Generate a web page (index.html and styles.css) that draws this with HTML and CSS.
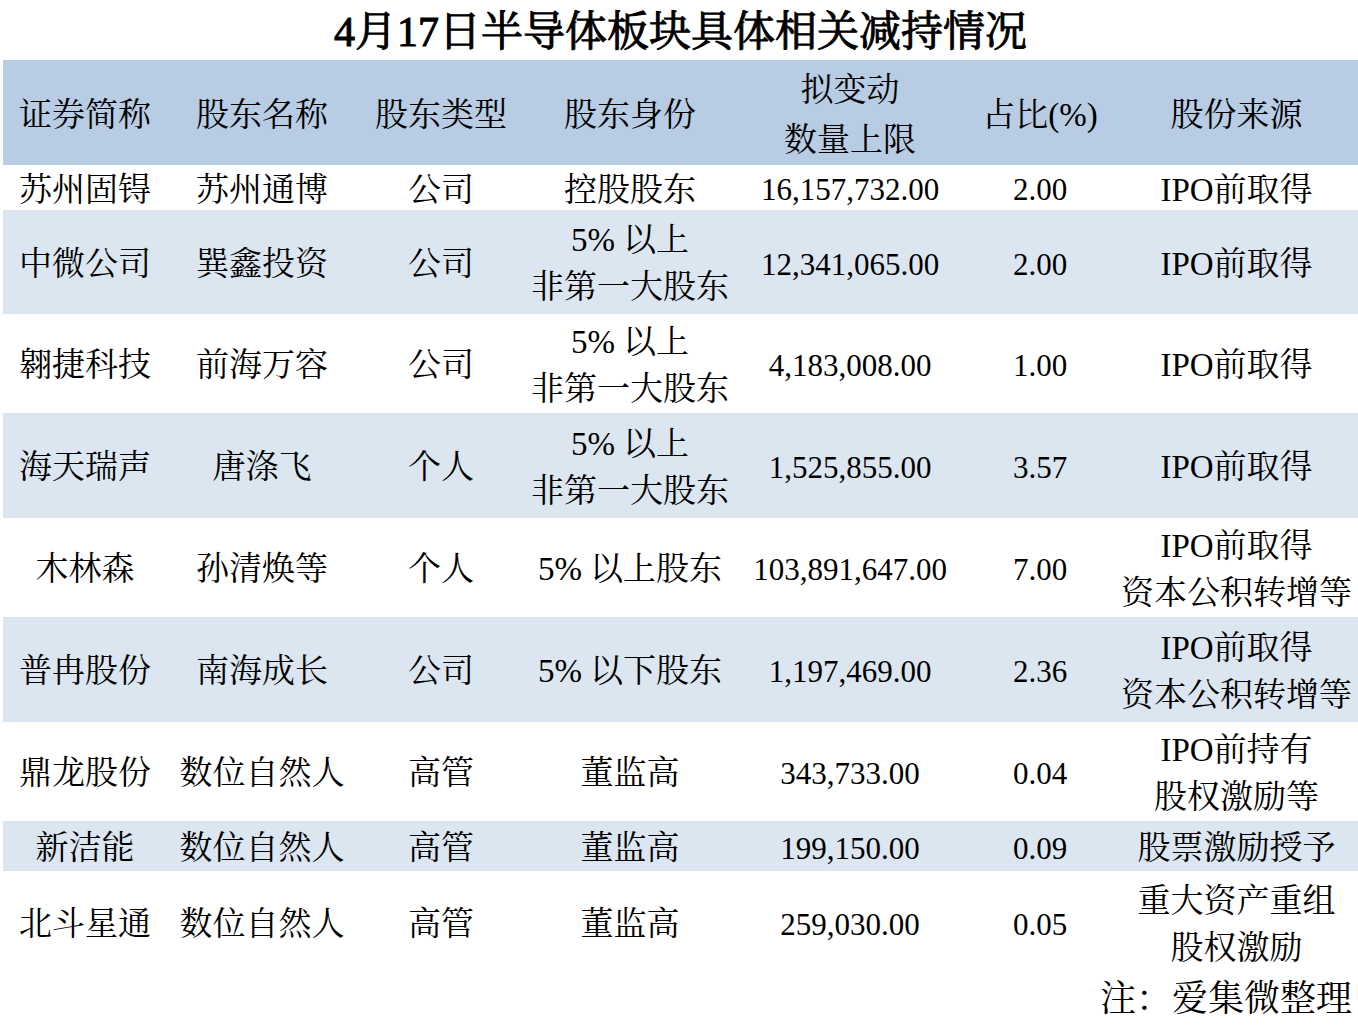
FILE: index.html
```html
<!DOCTYPE html>
<html lang="zh-CN">
<head>
<meta charset="utf-8">
<title>4月17日半导体板块具体相关减持情况</title>
<link rel="stylesheet" href="styles.css">
</head>
<body>
<div class="page">
  <h1 class="title">4月17日半导体板块具体相关减持情况</h1>
  <table class="grid">
    <colgroup>
      <col class="c1"><col class="c2"><col class="c3"><col class="c4"><col class="c5"><col class="c6"><col class="c7">
    </colgroup>
    <thead>
      <tr class="head r105">
        <th>证券简称</th><th>股东名称</th><th>股东类型</th><th>股东身份</th>
        <th>拟变动<br>数量上限</th><th>占比(%)</th><th>股份来源</th>
      </tr>
    </thead>
    <tbody>
      <tr class="r45">
        <td>苏州固锝</td><td>苏州通博</td><td>公司</td><td>控股股东</td>
        <td class="num">16,157,732.00</td><td class="num">2.00</td><td>IPO前取得</td>
      </tr>
      <tr class="alt r104">
        <td>中微公司</td><td>巽鑫投资</td><td>公司</td><td>5% 以上<br>非第一大股东</td>
        <td class="num">12,341,065.00</td><td class="num">2.00</td><td>IPO前取得</td>
      </tr>
      <tr class="r99">
        <td>翱捷科技</td><td>前海万容</td><td>公司</td><td>5% 以上<br>非第一大股东</td>
        <td class="num">4,183,008.00</td><td class="num">1.00</td><td>IPO前取得</td>
      </tr>
      <tr class="alt r105">
        <td>海天瑞声</td><td>唐涤飞</td><td>个人</td><td>5% 以上<br>非第一大股东</td>
        <td class="num">1,525,855.00</td><td class="num">3.57</td><td>IPO前取得</td>
      </tr>
      <tr class="r99">
        <td>木林森</td><td>孙清焕等</td><td>个人</td><td>5% 以上股东</td>
        <td class="num">103,891,647.00</td><td class="num">7.00</td><td>IPO前取得<br>资本公积转增等</td>
      </tr>
      <tr class="alt r105">
        <td>普冉股份</td><td>南海成长</td><td>公司</td><td>5% 以下股东</td>
        <td class="num">1,197,469.00</td><td class="num">2.36</td><td>IPO前取得<br>资本公积转增等</td>
      </tr>
      <tr class="r99">
        <td>鼎龙股份</td><td>数位自然人</td><td>高管</td><td>董监高</td>
        <td class="num">343,733.00</td><td class="num">0.04</td><td>IPO前持有<br>股权激励等</td>
      </tr>
      <tr class="alt r50">
        <td>新洁能</td><td>数位自然人</td><td>高管</td><td>董监高</td>
        <td class="num">199,150.00</td><td class="num">0.09</td><td>股票激励授予</td>
      </tr>
      <tr class="r103">
        <td>北斗星通</td><td>数位自然人</td><td>高管</td><td>董监高</td>
        <td class="num">259,030.00</td><td class="num">0.05</td><td>重大资产重组<br>股权激励</td>
      </tr>
    </tbody>
  </table>
  <p class="note">注：爱集微整理</p>
</div>
</body>
</html>
```
FILE: styles.css
```css
html, body {
  margin: 0;
  padding: 0;
  background: #ffffff;
}

body {
  font-family: "Liberation Serif", "Noto Serif CJK SC", "Noto Sans CJK SC", serif;
  color: #000000;
}

.page {
  width: 1355px;
  margin-left: 3px;
}

.title {
  margin: 0;
  height: 60px;
  line-height: 64px;
  font-size: 42px;
  font-weight: 400;
  -webkit-text-stroke: 1px #000000;
  text-align: center;
}

.grid {
  width: 1355px;
  border-collapse: collapse;
  table-layout: fixed;
  font-size: 33px;
}

.c1 { width: 164px; }
.c2 { width: 190px; }
.c3 { width: 168px; }
.c4 { width: 210px; }
.c5 { width: 230px; }
.c6 { width: 150px; }
.c7 { width: 243px; }

.grid th,
.grid td {
  padding: 4px 0 0 0;
  text-align: center;
  vertical-align: middle;
  font-weight: 400;
  line-height: 47px;
  white-space: nowrap;
}

.grid th {
  line-height: 50px;
}

.head {
  background: #b8cce4;
}

.alt {
  background: #dce6f1;
}

.num {
  font-size: 31px;
}

.r45 { height: 45px; }
.r50 { height: 50px; }
.r99 { height: 99px; }
.r103 { height: 103px; }
.r104 { height: 104px; }
.r105 { height: 105px; }

.grid .r45 td { line-height: 40px; }
.grid .r50 td { line-height: 45px; }

.note {
  margin: 0;
  padding-right: 6px;
  text-align: right;
  font-size: 36px;
  line-height: 50px;
}
```
